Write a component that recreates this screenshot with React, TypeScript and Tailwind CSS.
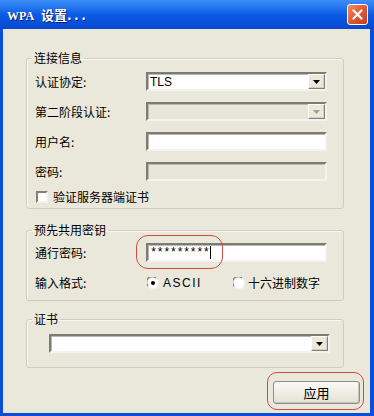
import React from "react";

const cjk = "font-['Noto_Sans_CJK_SC','Noto_Sans',sans-serif]";

function DropArrow({ disabled }: { disabled?: boolean }) {
  return (
    <div className="absolute right-0 top-0 flex h-full w-[17px] items-center justify-center border border-t-white border-l-white border-r-[#808080] border-b-[#808080] bg-[#ECE9D8] shadow-[inset_-1px_-1px_0_#D4D0C8]">
      <svg width="7" height="4" viewBox="0 0 7 4">
        <path d="M0 0h7L3.5 4z" fill={disabled ? "#A0A098" : "#000"} />
      </svg>
    </div>
  );
}

function Field({
  width,
  disabled,
  combo,
  children,
}: {
  width: string;
  disabled?: boolean;
  combo?: boolean;
  children?: React.ReactNode;
}) {
  return (
    <div
      className={`relative h-[19px] ${width} border-2 border-t-[#7C7C74] border-l-[#7C7C74] border-r-[#F4F4EE] border-b-[#F4F4EE] shadow-[inset_1px_1px_0_#B8B8B0] ${
        disabled ? "bg-[#E8E6D8]" : "bg-white"
      }`}
    >
      <div className="flex h-full items-center pl-[2px] text-[12px] leading-none text-black">
        {children}
      </div>
      {combo && <DropArrow disabled={disabled} />}
    </div>
  );
}

function Row({ label, children }: { label: string; children: React.ReactNode }) {
  return (
    <div className="flex h-[19px] items-center">
      <span className="w-[111px] text-[12px] leading-[14px]">{label}</span>
      {children}
    </div>
  );
}

function Radio({ checked }: { checked?: boolean }) {
  return (
    <svg width="12" height="12" viewBox="0 0 12 12">
      <circle cx="6" cy="6" r="5.5" fill="#fff" />
      <path d="M1.2 9A5.5 5.5 0 0 1 9 1.2" stroke="#808078" strokeWidth="1.2" fill="none" />
      <path d="M10.8 3A5.5 5.5 0 0 1 3 10.8" stroke="#F0F0EA" strokeWidth="1.2" fill="none" />
      {checked && <circle cx="6" cy="6" r="2" fill="#000" />}
    </svg>
  );
}

function Group({
  title,
  className,
  children,
}: {
  title: string;
  className: string;
  children: React.ReactNode;
}) {
  return (
    <fieldset
      className={`ml-[23px] w-[318px] rounded-[3px] border border-[#CFCDBF] shadow-[inset_1px_1px_0_#F8F8F2] ${className}`}
    >
      <legend className="ml-[5px] px-[2px] text-[12px] leading-[14px] text-black">
        {title}
      </legend>
      {children}
    </fieldset>
  );
}

export default function App() {
  return (
    <div className={`flex h-[416px] w-[374px] flex-col bg-[#0A4FD6] ${cjk}`}>
      {/* title bar */}
      <div className="flex h-[29px] items-center justify-between bg-gradient-to-b from-[#3E8EF8] via-[#0A5CE6] to-[#0748CF] pl-[7px] pr-[6px]">
        <div className="flex items-baseline gap-[7px] text-white [text-shadow:1px_1px_0_#0A1E6A]">
          <span className="font-['Liberation_Serif',serif] text-[12px] font-bold">WPA</span>
          <span className="text-[13px] font-bold">
            设置<span className="tracking-[3px]">...</span>
          </span>
        </div>
        <div className="flex h-[21px] w-[21px] items-center justify-center rounded-[3px] border border-white bg-gradient-to-br from-[#F08A6A] via-[#E05A32] to-[#C83C18]">
          <svg width="11" height="11" viewBox="0 0 11 11">
            <path d="M1.5 1.5l8 8M9.5 1.5l-8 8" stroke="#fff" strokeWidth="2.2" strokeLinecap="round" />
          </svg>
        </div>
      </div>

      {/* client area */}
      <div className="relative ml-[3px] mr-[4px] mb-[3px] flex flex-1 flex-col bg-[#EAE8DA] text-black">
        <Group title="连接信息" className="mt-[22px]">
          <div className="pt-[7px] pl-[8px] pr-[16px] pb-[5px]">
            <div className="flex flex-col gap-[11px]">
              <Row label="认证协定:">
                <Field width="w-[181px]" combo>
                  <span className="font-['Liberation_Sans',sans-serif]">TLS</span>
                </Field>
              </Row>
              <Row label="第二阶段认证:">
                <Field width="w-[181px]" combo disabled />
              </Row>
              <Row label="用户名:">
                <Field width="w-[181px]" />
              </Row>
              <Row label="密码:">
                <Field width="w-[181px]" disabled />
              </Row>
            </div>
            <div className="mt-[9px] flex h-[13px] items-center gap-[5px] pl-[1px]">
              <div className="h-[12px] w-[12px] border-2 border-t-[#808078] border-l-[#808078] border-r-[#F4F4EE] border-b-[#F4F4EE] bg-white" />
              <span className="text-[12px] leading-[14px]">验证服务器端证书</span>
            </div>
          </div>
        </Group>

        <Group title="预先共用密钥" className="mt-[14px]">
          <div className="pt-[6px] pl-[8px] pr-[16px] pb-[10px]">
            <Row label="通行密码:">
              <Field width="w-[181px]">
                <span className="font-['Liberation_Mono',monospace] text-[12px] tracking-[-0.6px]">*********</span>
                <span className="ml-[1px] h-[13px] w-[1px] bg-black" />
              </Field>
            </Row>
            <div className="mt-[13px] flex h-[15px] items-center">
              <span className="w-[112px] text-[12px] leading-[14px]">输入格式:</span>
              <div className="flex w-[86px] items-center gap-[4px]">
                <Radio checked />
                <span className="font-['Liberation_Sans',sans-serif] text-[12px] tracking-[1.5px]">ASCII</span>
              </div>
              <div className="flex items-center gap-[3px]">
                <Radio />
                <span className="text-[12px] leading-[14px]">十六进制数字</span>
              </div>
            </div>
          </div>
        </Group>

        <Group title="证书" className="mt-[11px]">
          <div className="pt-[8px] pl-[22px] pr-[13px] pb-[14px]">
            <Field width="w-[281px]" combo />
          </div>
        </Group>

        <div className="mt-[13px] flex justify-end pr-[10px]">
          <button className="h-[23px] w-[87px] rounded-[3px] border border-[#8E8E86] bg-gradient-to-b from-[#FAFAF6] to-[#E4E2D6] text-[13px] leading-none text-black shadow-[inset_-1px_-1px_0_#C6C4B8]">
            应用
          </button>
        </div>

        {/* red annotation outlines */}
        <div className="pointer-events-none absolute left-[133px] top-[206px] h-[34px] w-[87px] rounded-[12px] border-[1.5px] border-[#CF4A42]" />
        <div className="pointer-events-none absolute left-[264px] top-[343px] h-[38px] w-[97px] rounded-[10px] border-[1.5px] border-[#CF4A42]" />
      </div>
    </div>
  );
}
